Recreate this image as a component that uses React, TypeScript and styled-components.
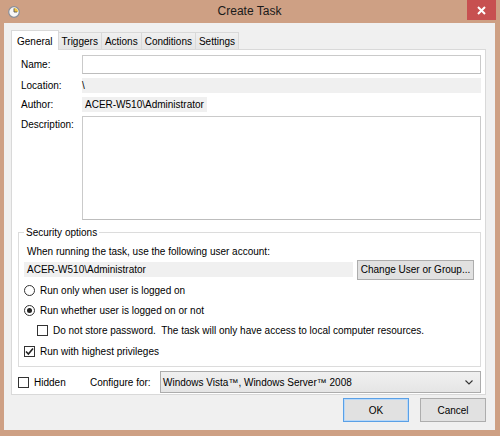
import React from 'react';
import styled, { createGlobalStyle } from 'styled-components';

const GlobalStyle = createGlobalStyle`
  html, body {
    margin: 0;
    padding: 0;
  }
  body {
    font-family: "Liberation Sans", Arial, sans-serif;
    font-size: 10px;
    color: #000;
  }
  * {
    box-sizing: border-box;
  }
`;

const Window = styled.div`
  width: 500px;
  height: 436px;
  background: #cea084;
  padding: 0 5px 6px 4px;
  display: flex;
  flex-direction: column;
`;

const TitleBar = styled.div`
  height: 24px;
  display: grid;
  grid-template-columns: 1fr auto 1fr;
  align-items: center;
`;

const TitleIcon = styled.div`
  padding-left: 4px;
  display: flex;
  align-items: center;
`;

const Title = styled.div`
  font-size: 12px;
  color: #1a1a1a;
  margin-top: -1px;
`;

const CloseButton = styled.div`
  justify-self: end;
  align-self: start;
  width: 29px;
  height: 20px;
  margin-right: -1px;
  background: #c75050;
  display: flex;
  align-items: center;
  justify-content: center;
`;

const Client = styled.div`
  flex: 1;
  background: #f0f0f0;
  padding: 7px 9px 8px 7px;
  display: flex;
  flex-direction: column;
`;

const TabStrip = styled.div`
  height: 19px;
  display: flex;
  align-items: flex-end;
  position: relative;
  z-index: 1;
`;

const Tab = styled.div<{ $active?: boolean }>`
  height: ${(p) => (p.$active ? '20px' : '17px')};
  margin-bottom: ${(p) => (p.$active ? '-1px' : '0')};
  margin-left: -1px;
  padding: ${(p) => (p.$active ? '1px 5px 0' : '0 3px')};
  border: 1px solid #d9d9d9;
  border-bottom: none;
  background: ${(p) => (p.$active ? '#fff' : 'linear-gradient(#f0f0f0, #e5e5e5)')};
  display: flex;
  align-items: center;
  white-space: nowrap;
  &:first-child {
    margin-left: 0;
  }
`;

const Panel = styled.div`
  border: 1px solid #d9d9d9;
  background: #fff;
  padding: 5px 4px 1px 6px;
  display: flex;
  flex-direction: column;
`;

const FormGrid = styled.div`
  display: grid;
  grid-template-columns: 64px 1fr;
  grid-template-rows: 19px 15px 15px 104px;
  row-gap: 4px;
`;

const Label = styled.div<{ $top?: boolean }>`
  padding-left: 3px;
  display: flex;
  align-items: ${(p) => (p.$top ? 'flex-start' : 'center')};
  padding-top: ${(p) => (p.$top ? '3px' : '0')};
`;

const TextBox = styled.div`
  border: 1px solid #cacaca;
  border-bottom-color: #bdbdbd;
  background: #fff;
`;

const ReadOnlyField = styled.div`
  background: #f0f0f0;
  display: flex;
  align-items: center;
`;

const AuthorValue = styled.span`
  display: inline-flex;
  align-items: center;
  background: #f0f0f0;
  padding: 0 3px;
  height: 15px;
`;

const GroupBox = styled.fieldset`
  margin: 5px 0 0 0;
  padding: 3px 6px 4px 5px;
  border: 1px solid #dcdcdc;
  min-width: 0;
`;

const Legend = styled.legend`
  padding: 0 2px;
  height: 15px;
  line-height: 15px;
`;

const Caption = styled.div`
  height: 16px;
  padding-left: 3px;
  display: flex;
  align-items: center;
`;

const AccountRow = styled.div`
  height: 21px;
  display: flex;
  align-items: center;
  gap: 4px;
`;

const AccountField = styled.div`
  flex: 1;
  height: 15px;
  background: #f0f0f0;
  padding-left: 3px;
  display: flex;
  align-items: center;
`;

const Button = styled.div<{ $default?: boolean; $width: number; $height: number }>`
  width: ${(p) => p.$width}px;
  height: ${(p) => p.$height}px;
  background: #e1e1e1;
  border: 1px solid ${(p) => (p.$default ? '#5aa0e6' : '#adadad')};
  box-shadow: ${(p) => (p.$default ? 'inset 0 0 0 1px #b8d8f8' : 'none')};
  display: flex;
  align-items: center;
  justify-content: center;
  white-space: nowrap;
`;

const OptionRow = styled.div<{ $indent?: number; $height?: number }>`
  height: ${(p) => p.$height ?? 20}px;
  padding-left: ${(p) => p.$indent ?? 0}px;
  display: flex;
  align-items: center;
  gap: 5px;
  white-space: nowrap;
`;

const RadioCircle = styled.span<{ $checked?: boolean }>`
  width: 11px;
  height: 11px;
  border: 1px solid #333;
  border-radius: 50%;
  background: #fff;
  display: inline-flex;
  align-items: center;
  justify-content: center;
  flex: none;
  &::after {
    content: '';
    width: 5px;
    height: 5px;
    border-radius: 50%;
    background: ${(p) => (p.$checked ? '#222' : 'transparent')};
  }
`;

const CheckBox = styled.span`
  width: 11px;
  height: 11px;
  border: 1px solid #333;
  background: #fff;
  display: inline-flex;
  align-items: center;
  justify-content: center;
  flex: none;
`;

const BottomRow = styled.div`
  margin-top: 4px;
  height: 22px;
  display: flex;
  align-items: center;
`;

const HiddenOption = styled.div`
  width: 72px;
  display: flex;
  align-items: center;
  gap: 5px;
`;

const ConfigureLabel = styled.div`
  width: 70px;
  white-space: nowrap;
`;

const Select = styled.div`
  flex: 1;
  height: 22px;
  border: 1px solid #acacac;
  background: linear-gradient(#f0f0f0, #e5e5e5);
  padding: 0 7px 0 2px;
  display: flex;
  align-items: center;
  justify-content: space-between;
`;

const ButtonRow = styled.div`
  margin-top: 3px;
  display: flex;
  justify-content: flex-end;
  gap: 11px;
`;

const Check = () => (
  <svg width="9" height="9" viewBox="0 0 9 9">
    <path d="M1 4.5 L3.4 7 L8 1.5" fill="none" stroke="#222" strokeWidth="1.6" />
  </svg>
);

const ClockIcon = () => (
  <svg width="12" height="12" viewBox="0 0 12 12">
    <circle cx="6" cy="6" r="5.3" fill="#f7f7f7" stroke="#8a8f99" strokeWidth="1.2" />
    <path d="M6 6 L6 2 A4 4 0 0 1 10 6 Z" fill="#f2c744" />
    <path d="M6 2.4 V6 H9" fill="none" stroke="#555" strokeWidth="0.9" />
  </svg>
);

const CloseGlyph = () => (
  <svg width="9" height="9" viewBox="0 0 9 9">
    <path d="M1 1 L8 8 M8 1 L1 8" stroke="#fff" strokeWidth="2" />
  </svg>
);

const Chevron = () => (
  <svg width="8" height="5" viewBox="0 0 8 5">
    <path d="M0.5 0.5 L4 4 L7.5 0.5" fill="none" stroke="#333" strokeWidth="1.1" />
  </svg>
);

const tabs = ['General', 'Triggers', 'Actions', 'Conditions', 'Settings'];

export default function App() {
  return (
    <>
      <GlobalStyle />
      <Window>
        <TitleBar>
          <TitleIcon>
            <ClockIcon />
          </TitleIcon>
          <Title>Create Task</Title>
          <CloseButton>
            <CloseGlyph />
          </CloseButton>
        </TitleBar>

        <Client>
          <TabStrip>
            {tabs.map((t, i) => (
              <Tab key={t} $active={i === 0}>
                {t}
              </Tab>
            ))}
          </TabStrip>

          <Panel>
            <FormGrid>
              <Label>Name:</Label>
              <TextBox />
              <Label>Location:</Label>
              <ReadOnlyField>\</ReadOnlyField>
              <Label>Author:</Label>
              <div>
                <AuthorValue>ACER-W510\Administrator</AuthorValue>
              </div>
              <Label $top>Description:</Label>
              <TextBox />
            </FormGrid>

            <GroupBox>
              <Legend>Security options</Legend>
              <Caption>When running the task, use the following user account:</Caption>
              <AccountRow>
                <AccountField>ACER-W510\Administrator</AccountField>
                <Button $width={117} $height={20}>
                  Change User or Group...
                </Button>
              </AccountRow>
              <OptionRow>
                <RadioCircle />
                Run only when user is logged on
              </OptionRow>
              <OptionRow>
                <RadioCircle $checked />
                Run whether user is logged on or not
              </OptionRow>
              <OptionRow $indent={13} $height={21}>
                <CheckBox />
                Do not store password.&nbsp; The task will only have access to local computer resources.
              </OptionRow>
              <OptionRow $height={21}>
                <CheckBox>
                  <Check />
                </CheckBox>
                Run with highest privileges
              </OptionRow>
            </GroupBox>

            <BottomRow>
              <HiddenOption>
                <CheckBox />
                Hidden
              </HiddenOption>
              <ConfigureLabel>Configure for:</ConfigureLabel>
              <Select>
                <span>Windows Vista™, Windows Server™ 2008</span>
                <Chevron />
              </Select>
            </BottomRow>
          </Panel>

          <ButtonRow>
            <Button $default $width={66} $height={24}>
              OK
            </Button>
            <Button $width={66} $height={24}>
              Cancel
            </Button>
          </ButtonRow>
        </Client>
      </Window>
    </>
  );
}
